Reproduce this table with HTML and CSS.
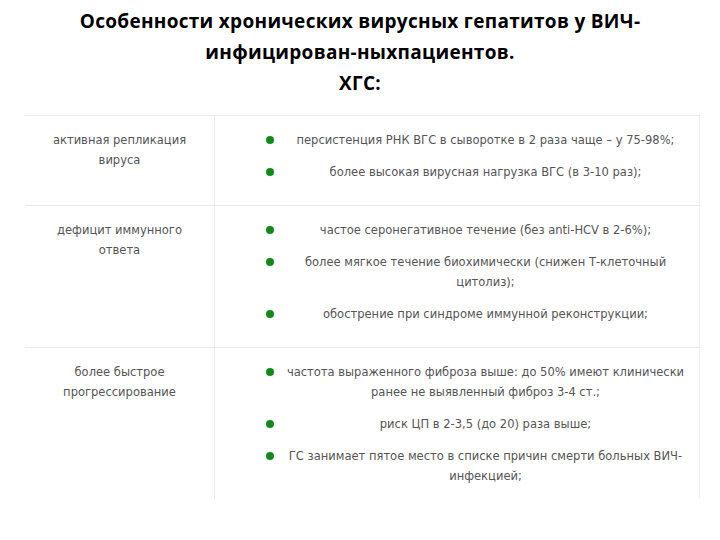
FILE: index.html
```html
<!DOCTYPE html>
<html lang="ru">
<head>
<meta charset="utf-8">
<link rel="stylesheet" href="styles.css">
</head>
<body>
<div class="slide">
  <h1 class="title">Особенности хронических вирусных гепатитов у ВИЧ-<br>инфицирован-ныхпациентов.<br>ХГС:</h1>
  <div class="table">
    <div class="row">
      <div class="cell-left">активная репликация<br>вируса</div>
      <div class="cell-right">
        <div class="item"><span class="dot"></span><span class="txt">персистенция РНК ВГС в сыворотке в 2 раза чаще – у 75-98%;</span></div>
        <div class="item"><span class="dot"></span><span class="txt">более высокая вирусная нагрузка ВГС (в 3-10 раз);</span></div>
      </div>
    </div>
    <div class="row">
      <div class="cell-left">дефицит иммунного<br>ответа</div>
      <div class="cell-right">
        <div class="item"><span class="dot"></span><span class="txt">частое серонегативное течение (без anti-HCV в 2-6%);</span></div>
        <div class="item"><span class="dot"></span><span class="txt">более мягкое течение биохимически (снижен Т-клеточный<br>цитолиз);</span></div>
        <div class="item"><span class="dot"></span><span class="txt">обострение при синдроме иммунной реконструкции;</span></div>
      </div>
    </div>
    <div class="row last">
      <div class="cell-left">более быстрое<br>прогрессирование</div>
      <div class="cell-right">
        <div class="item"><span class="dot"></span><span class="txt"><span class="nw">частота выраженного фиброза выше: до 50% имеют клинически</span><br>ранее не выявленный фиброз 3-4 ст.;</span></div>
        <div class="item"><span class="dot"></span><span class="txt">риск ЦП в 2-3,5 (до 20) раза выше;</span></div>
        <div class="item"><span class="dot"></span><span class="txt">ГС занимает пятое место в списке причин смерти больных ВИЧ-<br>инфекцией;</span></div>
      </div>
    </div>
  </div>
</div>
</body>
</html>
```
FILE: styles.css
```css
html, body {
  margin: 0;
  padding: 0;
  background: #ffffff;
}
.slide {
  width: 720px;
  height: 540px;
  overflow: hidden;
}
.title {
  margin: 0;
  padding-top: 6px;
  font-family: "Open Sans", "Liberation Sans", sans-serif;
  font-weight: 700;
  font-size: 19px;
  line-height: 31px;
  color: #000;
  text-align: center;
  letter-spacing: 0.3px;
}
.table {
  margin: 16px 0 0 25px;
  width: 675px;
  border-top: 1px solid #ececec;
  font-family: "DejaVu Sans Condensed", "DejaVu Sans", sans-serif;
  font-size: 12.8px;
  line-height: 20px;
  color: #555555;
}
.row {
  display: flex;
  border-bottom: 1px solid #e8e8e8;
}
.row.last {
  border-bottom: none;
}
.row.last .cell-right {
  padding-bottom: 13px;
}
.cell-left {
  width: 190px;
  box-sizing: border-box;
  border-right: 1px solid #ececec;
  text-align: center;
  padding: 14px 0 0 0;
}
.cell-right {
  flex: 1;
  padding: 14px 14px 23px 51px;
  border-right: 1px solid #f0f0f0;
  display: flex;
  flex-direction: column;
  gap: 12px;
}
.item {
  display: flex;
  align-items: flex-start;
}
.dot {
  flex: none;
  width: 8px;
  height: 8px;
  border-radius: 50%;
  background: #118a1a;
  margin-top: 6px;
  margin-right: 12px;
}
.txt {
  flex: 1;
  text-align: center;
}
.nw {
  white-space: nowrap;
}
```
